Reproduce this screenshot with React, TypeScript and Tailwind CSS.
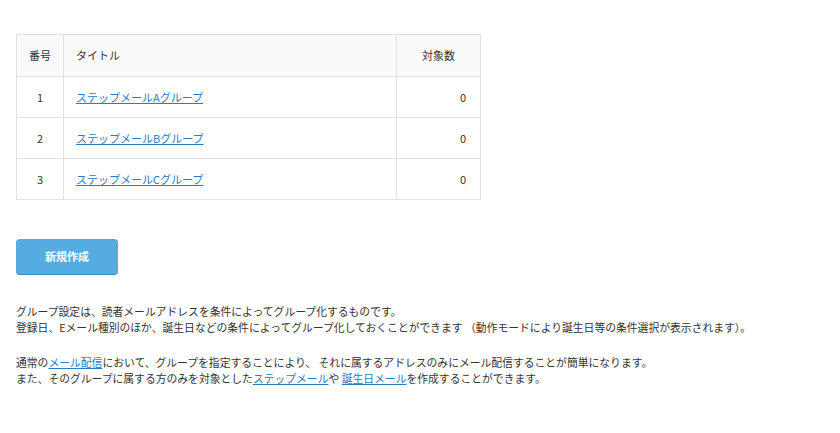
import React from "react";

const rows = [
  { n: 1, t: "ステップメールAグループ", c: 0 },
  { n: 2, t: "ステップメールBグループ", c: 0 },
  { n: 3, t: "ステップメールCグループ", c: 0 },
];

export default function App() {
  return (
    <div
      className="min-h-[433px] bg-white px-4 pt-[34px] text-[10.8px] text-[#333]"
      style={{ fontFamily: '"Noto Sans CJK JP", "Noto Sans", sans-serif' }}
    >
      <table className="w-[465px] border-collapse border border-[#e1e1e1] text-[11px]">
        <thead>
          <tr className="h-[42px] bg-[#fafafa]">
            <th className="w-[47px] border border-[#e1e1e1] text-center font-normal">番号</th>
            <th className="border border-[#e1e1e1] pl-3 text-left font-normal">タイトル</th>
            <th className="w-[84px] border border-[#e1e1e1] text-center font-normal">対象数</th>
          </tr>
        </thead>
        <tbody>
          {rows.map((r) => (
            <tr key={r.n} className="h-[41px]">
              <td className="border border-[#e1e1e1] text-center">{r.n}</td>
              <td className="border border-[#e1e1e1] pl-3">
                <a href="#" className="text-[#2a7bc1] underline">{r.t}</a>
              </td>
              <td className="border border-[#e1e1e1] pr-[14px] text-right">{r.c}</td>
            </tr>
          ))}
        </tbody>
      </table>

      <button className="mt-[39px] flex h-[35px] w-[102px] items-center justify-center rounded-[4px] bg-[#55acdf] text-[11px] font-bold text-white shadow-[0_1px_0_#3b87b5]">
        新規作成
      </button>

      <div className="mt-[29px] whitespace-nowrap leading-[16px]">
        <p>グループ設定は、読者メールアドレスを条件によってグループ化するものです。</p>
        <p>登録日、Eメール種別のほか、誕生日などの条件によってグループ化しておくことができます （動作モードにより誕生日等の条件選択が表示されます）。</p>
        <p className="mt-[19px]">
          通常の<a href="#" className="text-[#2a7bc1] underline">メール配信</a>において、グループを指定することにより、 それに属するアドレスのみにメール配信することが簡単になります。
        </p>
        <p>
          また、そのグループに属する方のみを対象とした<a href="#" className="text-[#2a7bc1] underline">ステップメール</a>や <a href="#" className="text-[#2a7bc1] underline">誕生日メール</a>を作成することができます。
        </p>
      </div>
    </div>
  );
}
